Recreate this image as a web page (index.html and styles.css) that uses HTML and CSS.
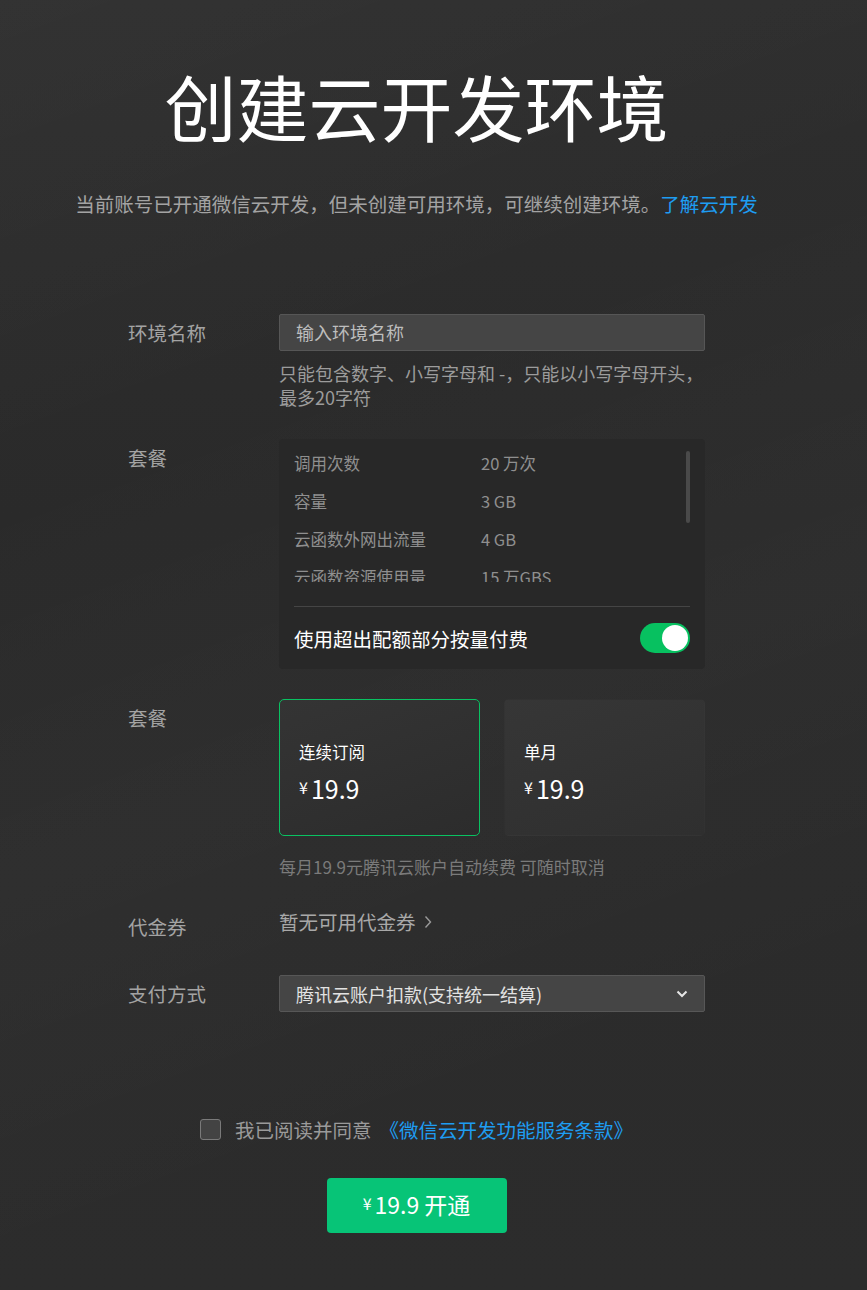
FILE: index.html
```html
<!DOCTYPE html>
<html lang="zh-CN">
<head>
<meta charset="utf-8">
<title>创建云开发环境</title>
<link rel="stylesheet" href="styles.css">
</head>
<body>
<div class="page">
  <header class="hero">
    <h1 class="title">创建云开发环境</h1>
    <p class="subtitle">当前账号已开通微信云开发，但未创建可用环境，可继续创建环境。<a class="link" href="#">了解云开发</a></p>
  </header>

  <form class="form">
    <div class="row row-name">
      <label class="label">环境名称</label>
      <div class="field">
        <div class="input">输入环境名称</div>
        <p class="hint">只能包含数字、小写字母和 -，只能以小写字母开头，最多20字符</p>
      </div>
    </div>

    <div class="row row-pack">
      <div class="label">套餐</div>
      <div class="field">
        <div class="pack">
          <div class="pack-scroll">
            <div class="pack-row"><span>调用次数</span><span>20 万次</span></div>
            <div class="pack-row"><span>容量</span><span>3 GB</span></div>
            <div class="pack-row"><span>云函数外网出流量</span><span>4 GB</span></div>
            <div class="pack-row"><span>云函数资源使用量</span><span>15 万GBS</span></div>
          </div>
          <div class="thumb"></div>
          <div class="pack-divider"></div>
          <div class="pack-toggle-row">
            <span>使用超出配额部分按量付费</span>
            <span class="switch"><span class="knob"></span></span>
          </div>
        </div>
      </div>
    </div>

    <div class="row row-plan">
      <div class="label">套餐</div>
      <div class="field">
        <div class="cards">
          <div class="card card-active">
            <div class="card-name">连续订阅</div>
            <div class="price"><span class="yen">¥</span>19.9</div>
          </div>
          <div class="card">
            <div class="card-name">单月</div>
            <div class="price"><span class="yen">¥</span>19.9</div>
          </div>
        </div>
        <p class="note">每月19.9元腾讯云账户自动续费 可随时取消</p>
      </div>
    </div>

    <div class="row row-coupon">
      <div class="label">代金券</div>
      <div class="field">
        <div class="coupon">暂无可用代金券
          <svg class="chev-right" width="8" height="14" viewBox="0 0 8 14"><path d="M1.5 1.5 L6.5 7 L1.5 12.5" fill="none" stroke="#9a9a9a" stroke-width="1.4"/></svg>
        </div>
      </div>
    </div>

    <div class="row row-pay">
      <div class="label">支付方式</div>
      <div class="field">
        <div class="select">
          <span>腾讯云账户扣款(支持统一结算)</span>
          <svg class="chev-down" width="12" height="8" viewBox="0 0 12 8"><path d="M1.5 1.5 L6 6 L10.5 1.5" fill="none" stroke="#e6e6e6" stroke-width="2"/></svg>
        </div>
      </div>
    </div>
  </form>

  <div class="agree">
    <span class="checkbox"></span>
    <span class="agree-text">我已阅读并同意</span>
    <a class="link" href="#">《微信云开发功能服务条款》</a>
  </div>

  <div class="actions">
    <button class="btn" type="button"><span class="btn-yen">¥</span>19.9 开通</button>
  </div>
</div>
</body>
</html>
```

FILE: styles.css
```css
* { box-sizing: border-box; }

html, body {
  margin: 0;
  padding: 0;
}

body {
  background-color: #2b2b2b;
  background-image:
    linear-gradient(160deg, rgba(255,255,255,0.025) 0%, rgba(255,255,255,0) 30%, rgba(255,255,255,0.02) 55%, rgba(255,255,255,0) 80%),
    linear-gradient(180deg, #2e2e2e 0%, #2a2a2a 40%, #2c2c2c 100%);
  min-height: 1290px;
  font-family: "Noto Sans CJK SC", "Microsoft YaHei", "Noto Sans", sans-serif;
  color: #a0a0a0;
}

.page {
  width: 833px;
  padding-top: 60px;
  padding-bottom: 57px;
}

.hero {
  text-align: center;
}

.title {
  margin: 0;
  font-size: 72px;
  line-height: 90px;
  font-weight: 400;
  color: #ffffff;
  letter-spacing: 0;
}

.subtitle {
  margin: 39px 0 0;
  font-size: 19.5px;
  line-height: 30px;
  color: #a3a3a3;
}

.link {
  color: #1e9df2;
  text-decoration: none;
}

.form {
  margin-top: 95px;
  display: flex;
  flex-direction: column;
  padding-left: 128px;
}

.row {
  display: grid;
  grid-template-columns: 151px 426px;
}

.label {
  font-size: 19.5px;
  line-height: 38px;
  color: #a3a3a3;
}

.row-name { margin-bottom: 30px; }
.row-pack { margin-bottom: 30px; }
.row-plan { margin-bottom: 29px; }
.row-coupon { margin-bottom: 29px; }

.input {
  height: 37px;
  background: #454545;
  border: 1px solid #565656;
  border-radius: 2px;
  padding-left: 16px;
  font-size: 18px;
  line-height: 35px;
  color: #bdbdbd;
}

.hint {
  margin: 10px 0 0;
  font-size: 18px;
  line-height: 24px;
  color: #9c9c9c;
}

/* package box */
.pack {
  position: relative;
  height: 230px;
  background: #282828;
  border-radius: 4px;
  padding: 0 15px;
}

.pack-scroll {
  height: 143px;
  overflow: hidden;
  padding-top: 5px;
}

.pack-row {
  display: grid;
  grid-template-columns: 187px 1fr;
  font-size: 16.5px;
  line-height: 38px;
  color: #8f8f8f;
}

.thumb {
  position: absolute;
  right: 15px;
  top: 12px;
  width: 4px;
  height: 72px;
  border-radius: 2px;
  background: #4a4a4a;
}

.pack-divider {
  margin-top: 24px;
  height: 1px;
  background: #454545;
}

.pack-toggle-row {
  margin-top: 16px;
  display: flex;
  align-items: center;
  justify-content: space-between;
  height: 30px;
  font-size: 19.5px;
  color: #ffffff;
}

.switch {
  width: 50px;
  height: 30px;
  border-radius: 15px;
  background: #07c160;
  display: flex;
  align-items: center;
  justify-content: flex-end;
  padding-right: 2px;
}

.knob {
  width: 26px;
  height: 26px;
  border-radius: 50%;
  background: #ffffff;
}

/* plan cards */
.cards {
  display: grid;
  grid-template-columns: 201px 201px;
  column-gap: 24px;
}

.card {
  height: 137px;
  border-radius: 5px;
  background: linear-gradient(160deg, #363636 0%, #2f2f2f 100%);
  padding: 38px 0 0 19px;
  border: 1px solid transparent;
}

.card-active {
  border-color: #09c262;
  background: linear-gradient(160deg, #343434 0%, #2c2c2c 100%);
}

.card-name {
  font-size: 16.5px;
  line-height: 28px;
  color: #ffffff;
}

.price {
  margin-top: 4px;
  font-size: 25px;
  line-height: 34px;
  color: #ffffff;
}

.yen {
  font-size: 16px;
  margin-right: 3px;
  vertical-align: 5px;
}

.note {
  margin: 19px 0 0;
  font-size: 17px;
  line-height: 24px;
  color: #7a7a7a;
}

.coupon {
  font-size: 19.5px;
  line-height: 28px;
  color: #a8a8a8;
  display: flex;
  align-items: center;
  gap: 8px;
}

.select {
  height: 37px;
  background: #454545;
  border: 1px solid #575757;
  border-radius: 2px;
  padding: 0 16px;
  display: flex;
  align-items: center;
  justify-content: space-between;
  font-size: 18px;
  color: #e2e2e2;
}

.agree {
  margin-top: 101px;
  display: flex;
  align-items: center;
  justify-content: center;
  height: 30px;
  font-size: 19.5px;
  color: #9a9a9a;
}

.checkbox {
  width: 21px;
  height: 21px;
  border: 1px solid #7a7a7a;
  background: #434343;
  border-radius: 3px;
  margin-right: 14px;
}

.agree-text { margin-right: 8px; }

.actions {
  margin-top: 34px;
  display: flex;
  justify-content: center;
}

.btn {
  width: 180px;
  height: 55px;
  border: 0;
  border-radius: 4px;
  background: #07c477;
  color: #ffffff;
  font-family: inherit;
  font-size: 23px;
  line-height: 50px;
  padding: 0 0 4px;
}

.btn-yen {
  font-size: 16px;
  margin-right: 3px;
  vertical-align: 4px;
}
```
